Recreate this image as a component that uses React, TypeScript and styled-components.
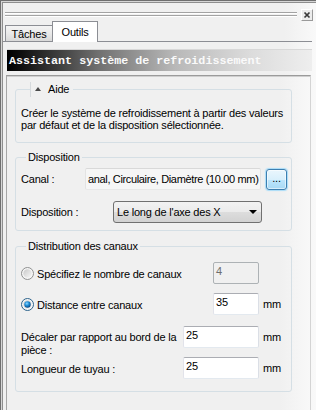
import { createGlobalStyle, styled } from 'styled-components';

const GlobalStyle = createGlobalStyle`
  html, body {
    margin: 0;
    padding: 0;
    background: #f0f0f0;
  }
  body {
    font-family: 'Liberation Sans', Arial, sans-serif;
    font-size: 11px;
    letter-spacing: -0.2px;
    color: #000;
  }
  *, *::before, *::after {
    box-sizing: border-box;
  }
`;

const RadioIcon = ({ checked }: { checked?: boolean }) => (
  <svg width="13" height="13" viewBox="0 0 13 13">
    <defs>
      <linearGradient id={checked ? 'radioOnFill' : 'radioOffFill'} x1="0" y1="0" x2="1" y2="1">
        <stop offset="0" stopColor="#c9c9c9" />
        <stop offset="1" stopColor="#f8f8f8" />
      </linearGradient>
      <radialGradient id="radioDot" cx="0.4" cy="0.35" r="0.7">
        <stop offset="0" stopColor="#8fd6ff" />
        <stop offset="0.45" stopColor="#1f8fd8" />
        <stop offset="1" stopColor="#0a3f78" />
      </radialGradient>
    </defs>
    <circle cx="6.5" cy="6.5" r="6" fill="#f6f6f6" stroke={checked ? '#2c628b' : '#8e8f8f'} />
    <circle cx="6.5" cy="6.5" r="4.2" fill={`url(#${checked ? 'radioOnFill' : 'radioOffFill'})`} />
    {checked && <circle cx="6.5" cy="6.5" r="3.2" fill="url(#radioDot)" />}
  </svg>
);

const App = () => (
  <>
    <GlobalStyle />
    <Frame>
      <DockBar>
        <Grip>
          <GripLine />
          <GripLine />
        </Grip>
        <CloseButton>
          <svg width="10" height="10" viewBox="0 0 10 10">
            <path d="M2.5 2.5 L7.5 7.5 M7.5 2.5 L2.5 7.5" stroke="#3a3a3a" strokeWidth="1.7" />
          </svg>
        </CloseButton>
      </DockBar>

      <TabStrip>
        <Tab>Tâches</Tab>
        <Tab $active>Outils</Tab>
      </TabStrip>

      <TitleBar>Assistant système de refroidissement</TitleBar>

      <Panel>
        <Group $pb={11}>
          <HelpLegend>
            <UpArrow />
            Aide
          </HelpLegend>
          <HelpText>
            Créer le système de refroidissement à partir des valeurs par défaut et de la
            disposition sélectionnée.
          </HelpText>
        </Group>

        <Group $mt={7} $pb={7}>
          <Legend>Disposition</Legend>
          <FieldRow $mt={3}>
            <Label $w={64}>Canal :</Label>
            <TextBox $w={176} $readOnly>
              anal, Circulaire, Diamètre (10.00 mm)
            </TextBox>
            <BrowseButton>...</BrowseButton>
          </FieldRow>
          <FieldRow $mt={11}>
            <Label $w={92}>Disposition :</Label>
            <Select>
              <span>Le long de l'axe des X</span>
              <DropArrow />
            </Select>
          </FieldRow>
        </Group>

        <Group $mt={8} $pb={12}>
          <Legend>Distribution des canaux</Legend>
          <FieldRow $mt={8}>
            <RadioLabel>
              <RadioIcon />
              Spécifiez le nombre de canaux
            </RadioLabel>
            <TextBox $w={46} $disabled>
              4
            </TextBox>
            <Unit />
          </FieldRow>
          <FieldRow $mt={9}>
            <RadioLabel>
              <RadioIcon checked />
              Distance entre canaux
            </RadioLabel>
            <TextBox $w={46}>35</TextBox>
            <Unit>mm</Unit>
          </FieldRow>
          <FieldRow $mt={11} $top>
            <Label $wrap>Décaler par rapport au bord de la pièce :</Label>
            <TextBox $w={76}>25</TextBox>
            <Unit $top>mm</Unit>
          </FieldRow>
          <FieldRow $mt={0}>
            <Label $pt={2}>Longueur de tuyau :</Label>
            <TextBox $w={76}>25</TextBox>
            <Unit>mm</Unit>
          </FieldRow>
        </Group>
      </Panel>
    </Frame>
  </>
);

export default App;

const Frame = styled.div`
  width: 316px;
  height: 410px;
  display: flex;
  flex-direction: column;
  padding: 3px 0 0 3px;
  overflow: hidden;
  background: linear-gradient(to right, #f0f0f0 0%, #f0f0f0 90%, #f9f9f9 100%);
  box-shadow:
    inset 1px 1px 0 #6f6f6f,
    inset 2px 2px 0 #d6d6d6,
    inset 3px 3px 0 #8e8e8e;
`;

const DockBar = styled.div`
  display: flex;
  align-items: flex-start;
  gap: 4px;
  height: 12px;
  margin: 6px 3px 0 2px;
`;

const Grip = styled.div`
  flex: 1;
  display: flex;
  flex-direction: column;
  gap: 1px;
  padding-top: 3px;
`;

const GripLine = styled.div`
  height: 2px;
  border-top: 1px solid #a3a3a3;
  border-bottom: 1px solid #ffffff;
`;

const CloseButton = styled.div`
  width: 12px;
  height: 12px;
  display: flex;
  align-items: center;
  justify-content: center;
  background: #ececec;
  border: 1px solid;
  border-color: #ffffff #9a9a9a #9a9a9a #ffffff;
`;

const TabStrip = styled.div`
  display: flex;
  align-items: flex-end;
  height: 21px;
  margin-right: 4px;
  padding-left: 2px;
  border-bottom: 1px solid #8c8e94;
`;

const Tab = styled.div<{ $active?: boolean }>`
  display: flex;
  align-items: center;
  justify-content: center;
  height: ${(p) => (p.$active ? 21 : 16)}px;
  width: ${(p) => (p.$active ? 46 : 48)}px;
  margin-left: ${(p) => (p.$active ? -1 : 0)}px;
  margin-bottom: ${(p) => (p.$active ? -1 : 0)}px;
  border: 1px solid #8c8e94;
  border-bottom: none;
  background: ${(p) =>
    p.$active ? '#ffffff' : 'linear-gradient(#f4f4f4 0%, #e9e9e9 50%, #d9d9d9 100%)'};
  font-size: 11px;
  padding-top: ${(p) => (p.$active ? 0 : 1)}px;
`;

const TitleBar = styled.div`
  height: 22px;
  margin: 7px 4px 0 4px;
  padding: 1px 0 0 2px;
  line-height: 21px;
  font-family: 'Liberation Mono', 'Courier New', monospace;
  font-size: 11.7px;
  font-weight: bold;
  letter-spacing: 0;
  color: #fafafa;
  white-space: nowrap;
  overflow: hidden;
  background: linear-gradient(
    to right,
    #000000 0%,
    #101010 5%,
    #707070 30%,
    #b8b8b8 55%,
    #dcdcdc 80%,
    #eeeeee 100%
  );
  border-top: 1px solid #d8d8d8;
`;

const Panel = styled.div`
  flex: 1;
  margin: 4px 5px 0 3px;
  padding: 6px 18px 0 8px;
  border-top: 1px solid #9b9b9b;
  border-left: 1px solid #a6a6a6;
  border-right: 1px solid #d4d4d4;
  box-shadow: inset 0 1px 0 #cfcfcf;
  background: linear-gradient(to right, #f0f0f0 0%, #f0f0f0 90%, #f8f8f8 100%);
`;

const Group = styled.fieldset<{ $mt?: number; $pb?: number }>`
  margin: ${(p) => p.$mt ?? 0}px 0 0 0;
  padding: 0 1px ${(p) => p.$pb ?? 0}px 5px;
  min-width: 0;
  border: 1px solid #d5dfe5;
  border-radius: 3px;
`;

const Legend = styled.legend`
  margin-left: 5px;
  padding: 0 2px;
  line-height: 15px;
`;

const HelpLegend = styled.legend`
  display: flex;
  align-items: center;
  gap: 7px;
  margin-left: 9px;
  padding: 0 4px;
  line-height: 15px;
  border-left: 1px solid #d6dadd;
`;

const UpArrow = styled.span`
  width: 0;
  height: 0;
  border-left: 3.5px solid transparent;
  border-right: 3.5px solid transparent;
  border-bottom: 4px solid #4a4a4a;
  margin-top: -1px;
`;

const HelpText = styled.p`
  margin: 10px 0 0 0;
  line-height: 12px;
  padding-right: 4px;
`;

const FieldRow = styled.div<{ $mt: number; $top?: boolean }>`
  display: flex;
  align-items: ${(p) => (p.$top ? 'flex-start' : 'center')};
  margin-top: ${(p) => p.$mt}px;
`;

const Label = styled.div<{ $w?: number; $wrap?: boolean; $pt?: number }>`
  ${(p) => (p.$w ? `width: ${p.$w}px; flex: none;` : 'flex: 1;')}
  padding-top: ${(p) => p.$pt ?? (p.$wrap ? 5 : 0)}px;
  padding-right: 2px;
  line-height: 13px;
  white-space: ${(p) => (p.$wrap ? 'normal' : 'nowrap')};
`;

const RadioLabel = styled.div`
  flex: 1;
  display: flex;
  align-items: center;
  gap: 3px;
  white-space: nowrap;
  padding-top: 1px;

  svg {
    flex: none;
  }
`;

const TextBox = styled.div<{ $w: number; $disabled?: boolean; $readOnly?: boolean }>`
  flex: none;
  width: ${(p) => p.$w}px;
  height: 22px;
  padding: 1px 2px 0;
  line-height: 14px;
  white-space: nowrap;
  overflow: hidden;
  border: 1px solid;
  border-radius: 2px;
  border-color: ${(p) =>
    p.$disabled
      ? '#adb2b5'
      : p.$readOnly
        ? '#d9d9d9 #e3e3e3 #e8e8e8 #e3e3e3'
        : '#abadb3 #dbdfe6 #e3e9ef #e2e3ea'};
  background: ${(p) => (p.$disabled ? '#f0f0f0' : p.$readOnly ? '#f6f6f6' : '#ffffff')};
  color: ${(p) => (p.$disabled ? '#6d6d6d' : '#000')};
  ${(p) => p.$readOnly && 'display: flex; align-items: center; padding-top: 0; letter-spacing: -0.35px;'}
`;

const BrowseButton = styled.div`
  flex: none;
  width: 21px;
  height: 21px;
  margin-left: 5px;
  display: flex;
  align-items: flex-end;
  justify-content: center;
  padding-bottom: 5px;
  line-height: 1;
  border: 1px solid #3c7fb1;
  border-radius: 3px;
  background: linear-gradient(#eaf6fd 0%, #d9f0fc 50%, #bee6fd 50%, #a7d9f5 100%);
  box-shadow:
    inset 0 0 0 1px rgba(255, 255, 255, 0.55),
    0 0 1px 1px #a9dcf8;
`;

const Select = styled.div`
  flex: none;
  width: 149px;
  height: 22px;
  display: flex;
  align-items: center;
  justify-content: space-between;
  padding: 0 4px 0 3px;
  border: 1px solid #707070;
  border-radius: 3px;
  background: linear-gradient(#f2f2f2 0%, #ebebeb 50%, #dddddd 50%, #d2d2d2 100%);
  white-space: nowrap;
`;

const DropArrow = styled.span`
  width: 0;
  height: 0;
  border-left: 4px solid transparent;
  border-right: 4px solid transparent;
  border-top: 4px solid #000;
`;

const Unit = styled.div<{ $top?: boolean }>`
  flex: none;
  width: 31px;
  padding-left: 4px;
  padding-top: ${(p) => (p.$top ? 5 : 0)}px;
  line-height: 13px;
`;
